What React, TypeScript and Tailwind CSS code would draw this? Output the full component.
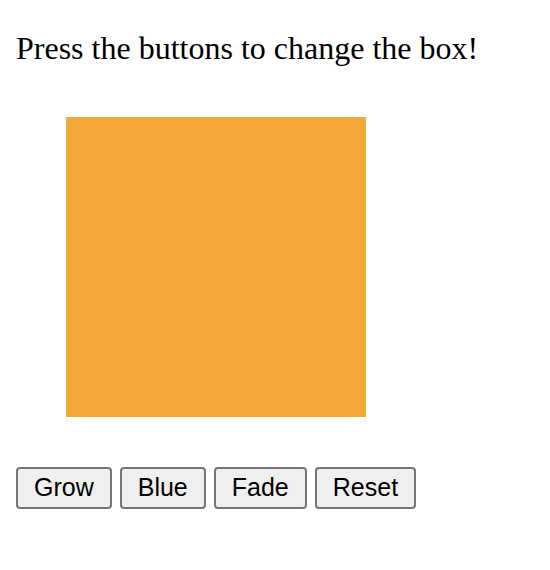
export default function App() {
    const buttons = ["Grow", "Blue", "Fade", "Reset"];

    return (
        <div className="min-h-[570px] bg-white px-[16px] pt-[30px]">
            <p className="text-[32px] leading-[1.15] text-black" style={{ fontFamily: '"Liberation Serif", "Times New Roman", serif' }}>
                Press the buttons to change the box!
            </p>

            {/* the box */}
            <div className="m-[50px] h-[300px] w-[300px] bg-[#f2a73b]"></div>

            <div className="flex gap-[8px]">
                {buttons.map((label) => (
                    <button
                        key={label}
                        className="h-[42px] rounded-[4px] border-2 border-[#767676] bg-[#efefef] px-[16px] text-[25px] leading-none text-black"
                        style={{ fontFamily: '"Liberation Sans", Arial, sans-serif' }}
                    >
                        {label}
                    </button>
                ))}
            </div>
        </div>
    );
}
